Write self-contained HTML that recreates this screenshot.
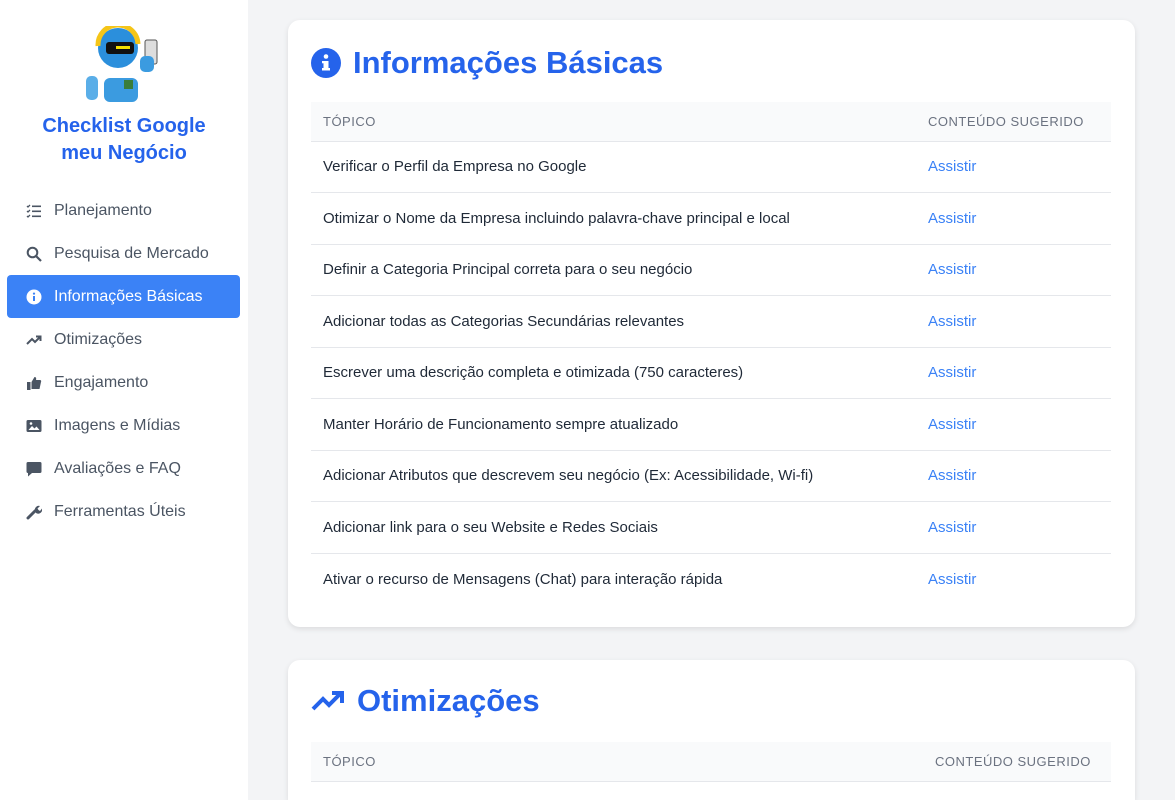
<!DOCTYPE html>
<html><head><meta charset="utf-8"><style>
*{margin:0;padding:0;box-sizing:border-box}
html,body{width:1175px;height:800px;overflow:hidden}
body{background:#f3f4f6;font-family:"Liberation Sans",sans-serif;position:relative}
.side{position:absolute;left:0;top:0;width:248px;height:800px;background:#fff}
.brand{position:absolute;top:113px;left:0;width:248px;text-align:center;color:#2563eb;font-weight:bold;font-size:20px;line-height:27px}
.nav{position:absolute;top:189px;left:7px;width:233px}
.nav div{height:43px;display:flex;align-items:center;padding-left:19px;font-size:16px;color:#4b5563;border-radius:4px;margin-bottom:0}
.nav div.act{background:#3b82f6;color:#fff}
.nav svg{width:16px;height:16px;margin-right:12px;flex:none}
.card{position:absolute;left:288px;width:847px;background:#fff;border-radius:12px;box-shadow:0 2px 6px rgba(0,0,0,.1)}
h2{position:absolute;left:23px;display:flex;align-items:center;color:#2563eb;font-size:31px;font-weight:bold}
table{position:absolute;left:23px;width:800px;border-collapse:collapse;font-size:15px;color:#1f2937}
th{background:#f9fafb;height:39px;text-align:left;font-weight:normal;font-size:13px;color:#6b7280;letter-spacing:.5px;padding-left:12px;border-bottom:1px solid #e5e7eb}
td{height:51.5px;padding-left:12px;border-bottom:1px solid #e5e7eb}
td.a{color:#3b82f6;width:195px}
tr:last-child td{border-bottom:none}
</style></head><body>
<div class="side">
<svg style="position:absolute;left:82px;top:26px" width="84" height="76" viewBox="0 0 84 76">
<rect x="22" y="52" width="34" height="24" rx="6" fill="#3b9be0"/>
<rect x="4" y="50" width="12" height="24" rx="5" fill="#5aaee8"/>
<circle cx="36" cy="22" r="20" fill="#2b8fdc"/>
<path d="M16 20 A20 20 0 0 1 56 18" stroke="#f5c518" stroke-width="5" fill="none"/>
<rect x="24" y="16" width="28" height="12" rx="3" fill="#111"/>
<rect x="34" y="20" width="14" height="3" fill="#f5e000"/>
<rect x="63" y="14" width="12" height="24" rx="2" fill="#ddd" stroke="#555"/>
<rect x="58" y="30" width="14" height="16" rx="5" fill="#3b9be0"/>
<rect x="42" y="54" width="9" height="9" fill="#3a7d3a"/>
</svg>
<div class="brand">Checklist Google<br>meu Negócio</div>
<div class="nav">
<div><svg viewBox="0 0 16 16" fill="#4b5563"><path d="M1 3l1 1 2-2M1 8l1 1 2-2M1 13l1 1 2-2" stroke="#4b5563" fill="none" stroke-width="1.3"/><rect x="6" y="2.5" width="9" height="1.6"/><rect x="6" y="7.5" width="9" height="1.6"/><rect x="6" y="12.5" width="9" height="1.6"/></svg>Planejamento</div>
<div><svg viewBox="0 0 16 16"><circle cx="6.5" cy="6.5" r="4.8" stroke="#4b5563" stroke-width="2" fill="none"/><path d="M10 10l5 5" stroke="#4b5563" stroke-width="2.2"/></svg>Pesquisa de Mercado</div>
<div class="act"><svg viewBox="0 0 16 16"><circle cx="8" cy="8" r="7.5" fill="#fff"/><rect x="7" y="7" width="2" height="5" fill="#3b82f6"/><circle cx="8" cy="4.6" r="1.1" fill="#3b82f6"/></svg>Informações Básicas</div>
<div><svg viewBox="0 0 16 16"><path d="M1 12l5-5 3 3 5-5M10 4.5h4.5V9" stroke="#4b5563" stroke-width="2" fill="none"/></svg>Otimizações</div>
<div><svg viewBox="0 0 16 16" fill="#4b5563"><rect x="1" y="7" width="3.5" height="8"/><path d="M5.5 7l3-5c1.5 0 2 1 1.5 3h4c1 0 1.5 1 1 2l-1.5 7H5.5z"/></svg>Engajamento</div>
<div><svg viewBox="0 0 16 16"><rect x="0.5" y="2" width="15" height="12" rx="1.5" fill="#4b5563"/><path d="M2.5 12l3.5-4 2.5 2.5 2-2 3 3.5z" fill="#fff"/><circle cx="5" cy="5.5" r="1.3" fill="#fff"/></svg>Imagens e Mídias</div>
<div><svg viewBox="0 0 16 16" fill="#4b5563"><path d="M2 1h12a1.5 1.5 0 0 1 1.5 1.5v8A1.5 1.5 0 0 1 14 12H6l-4 3.5V12A1.5 1.5 0 0 1 .5 10.5v-8A1.5 1.5 0 0 1 2 1z"/></svg>Avaliações e FAQ</div>
<div><svg viewBox="0 0 16 16"><path d="M2 14l7-7" stroke="#4b5563" stroke-width="3" stroke-linecap="round"/><path d="M9 7a4 4 0 0 1 5-5l-2.5 2.5 1 1.5 1.5 1L16 4.5A4 4 0 0 1 10 9z" fill="#4b5563"/></svg>Ferramentas Úteis</div>
</div>
</div>
<div class="card" style="top:20px;height:607px">
<h2 style="top:25px"><svg width="30" height="30" viewBox="0 0 30 30" style="margin-right:12px"><circle cx="15" cy="15" r="15" fill="#2563eb"/><rect x="12.5" y="13" width="5" height="9" fill="#fff"/><rect x="11" y="20" width="8" height="2.5" fill="#fff"/><rect x="11" y="13" width="4" height="2.3" fill="#fff"/><circle cx="15" cy="8.5" r="2.3" fill="#fff"/></svg>Informações Básicas</h2>
<table style="top:82px">
<tr><th>TÓPICO</th><th>CONTEÚDO SUGERIDO</th></tr>
<tr><td>Verificar o Perfil da Empresa no Google</td><td class="a">Assistir</td></tr>
<tr><td>Otimizar o Nome da Empresa incluindo palavra-chave principal e local</td><td class="a">Assistir</td></tr>
<tr><td>Definir a Categoria Principal correta para o seu negócio</td><td class="a">Assistir</td></tr>
<tr><td>Adicionar todas as Categorias Secundárias relevantes</td><td class="a">Assistir</td></tr>
<tr><td>Escrever uma descrição completa e otimizada (750 caracteres)</td><td class="a">Assistir</td></tr>
<tr><td>Manter Horário de Funcionamento sempre atualizado</td><td class="a">Assistir</td></tr>
<tr><td>Adicionar Atributos que descrevem seu negócio (Ex: Acessibilidade, Wi-fi)</td><td class="a">Assistir</td></tr>
<tr><td>Adicionar link para o seu Website e Redes Sociais</td><td class="a">Assistir</td></tr>
<tr><td>Ativar o recurso de Mensagens (Chat) para interação rápida</td><td class="a">Assistir</td></tr>
</table>
</div>
<div class="card" style="top:660px;height:140px;border-radius:12px 12px 0 0">
<h2 style="top:23px"><svg width="34" height="24" viewBox="0 0 34 24" style="margin-right:12px"><path d="M2 20l10-10 6 6 12-12M21 4h10v10" stroke="#2563eb" stroke-width="4" fill="none"/></svg>Otimizações</h2>
<table style="top:82px">
<tr><th>TÓPICO</th><th style="width:188px">CONTEÚDO SUGERIDO</th></tr>
</table>
</div>
</body></html>
